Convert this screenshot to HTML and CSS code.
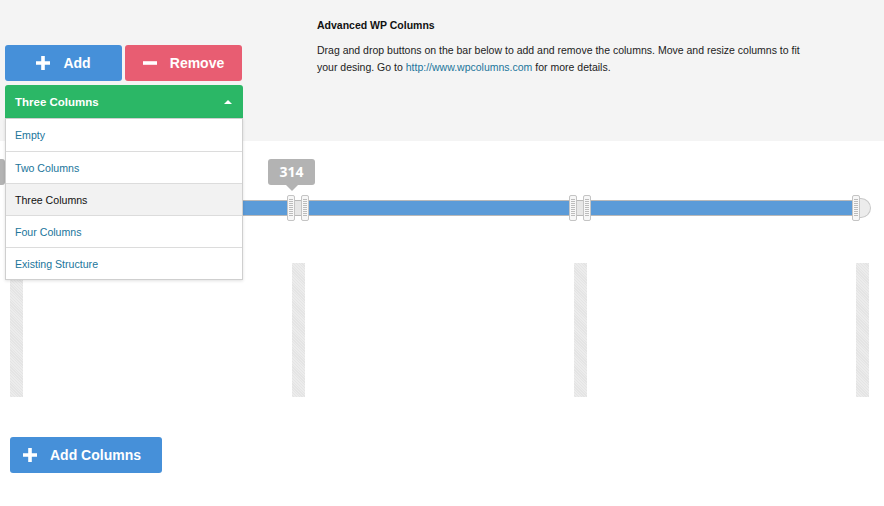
FILE: index.html
```html
<!DOCTYPE html>
<html>

<head>
  <meta charset="UTF-8">
  <link rel="stylesheet" href="styles.css">
</head>

<body>
  <div class="top">
    <div class="controls">
      <div class="btn-row">
        <button class="btn btn-add">
          <svg class="icon" viewBox="0 0 14 14"><path d="M7 0v14M0 7h14" /></svg>
          Add
        </button>
        <button class="btn btn-remove">
          <svg class="icon" viewBox="0 0 14 14"><path d="M0 7h14" /></svg>
          Remove
        </button>
      </div>
      <div class="select">
        <span>Three Columns</span>
        <span class="caret"></span>
      </div>
      <ul class="menu">
        <li class="menu-item">Empty</li>
        <li class="menu-item">Two Columns</li>
        <li class="menu-item active">Three Columns</li>
        <li class="menu-item">Four Columns</li>
        <li class="menu-item">Existing Structure</li>
      </ul>
    </div>

    <div class="intro">
      <h4 class="intro-title">Advanced WP Columns</h4>
      <p class="intro-text">Drag and drop buttons on the bar below to add and remove the columns. Move and resize columns to fit your desing. Go to <a href="#">http://www.wpcolumns.com</a> for more details.</p>
    </div>
  </div>

  <div class="workspace">
    <div class="slider">
      <div class="tip tip-first"></div>
      <div class="tip" style="left: 258px;">314</div>
      <div class="bar"></div>
      <div class="bar-cap"></div>
      <div class="gap" style="left: 285px;"></div>
      <div class="gap" style="left: 567px;"></div>
      <div class="handle" style="left: 0px;"></div>
      <div class="handle" style="left: 277px;"></div>
      <div class="handle" style="left: 291px;"></div>
      <div class="handle" style="left: 559px;"></div>
      <div class="handle" style="left: 573px;"></div>
      <div class="handle" style="left: 842px;"></div>
    </div>

    <div class="columns">
      <div class="divider"></div>
      <div class="divider"></div>
      <div class="divider"></div>
      <div class="divider"></div>
    </div>

    <button class="btn btn-add btn-columns">
      <svg class="icon" viewBox="0 0 14 14"><path d="M7 0v14M0 7h14" /></svg>
      Add Columns
    </button>
  </div>
</body>

</html>
```

FILE: styles.css
```css
body {
  margin: 0;
  font-family: 'Liberation Sans', Arial, sans-serif;
  color: #222;
  background: #fff;
  overflow: hidden;
}

.top {
  display: flex;
  height: 141px;
  background: #f4f4f4;
}

.controls {
  position: relative;
  width: 238px;
  margin: 45px 0 0 5px;
}

.btn-row {
  display: flex;
  gap: 3px;
}

.btn {
  display: flex;
  align-items: center;
  justify-content: center;
  gap: 13px;
  width: 117px;
  height: 36px;
  padding: 0;
  border: none;
  border-radius: 3px;
  color: white;
  font-family: 'Liberation Sans', Arial, sans-serif;
  font-size: 14px;
  font-weight: bold;
  cursor: pointer;
}

.btn-add {
  background: #4690d9;
}

.btn-remove {
  background: #e85d72;
}

.icon {
  width: 14px;
  height: 14px;
  stroke: white;
  stroke-width: 3.6;
  fill: none;
}

.select {
  display: flex;
  align-items: center;
  justify-content: space-between;
  height: 34px;
  margin-top: 4px;
  padding: 0 10px;
  background: #2bb766;
  border-radius: 3px 3px 0 0;
  color: white;
  font-size: 11.5px;
  font-weight: bold;
}

.caret {
  width: 0;
  height: 0;
  margin-right: 1px;
  border-left: 4px solid transparent;
  border-right: 4px solid transparent;
  border-bottom: 4px solid white;
}

/* dropdown list */
.menu {
  position: absolute;
  top: 73px;
  left: 0;
  width: 236px;
  margin: 0;
  padding: 0;
  list-style: none;
  background: white;
  border: 1px solid #cfcfcf;
  box-shadow: 0 1px 3px rgba(0, 0, 0, 0.12);
  z-index: 10;
}

.menu-item {
  height: 31px;
  padding-left: 9px;
  line-height: 32px;
  border-top: 1px solid #dcdcdc;
  color: #21759b;
  font-size: 10.6px;
}

.menu-item:first-child {
  border-top: none;
  height: 32px;
}

.menu-item.active {
  background: #f2f2f2;
  color: #111;
}

.intro {
  width: 490px;
  margin-left: 74px;
  padding-top: 19px;
}

.intro-title {
  margin: 0 0 11px 0;
  font-size: 10.5px;
  font-weight: bold;
  color: #111;
}

.intro-text {
  margin: 0;
  font-size: 10.5px;
  line-height: 17px;
  color: #222;
}

.intro-text a {
  color: #21759b;
  text-decoration: none;
}

.workspace {
  width: 859px;
  padding-left: 10px;
}

/* slider bar */
.slider {
  position: relative;
  height: 122px;
}

.bar {
  position: absolute;
  top: 59px;
  left: 0;
  width: 852px;
  height: 14px;
  background: #5b9bd8;
  border-top: 1px solid #b9b9b9;
  border-bottom: 1px solid #b9b9b9;
}

.bar-cap {
  position: absolute;
  top: 57px;
  left: 850px;
  width: 10px;
  height: 18px;
  background: #ececec;
  border: 1px solid #c8c8c8;
  border-left: none;
  border-radius: 0 10px 10px 0;
}

.gap {
  position: absolute;
  top: 60px;
  width: 8px;
  height: 14px;
  background: #e6e6e6;
}

.handle {
  position: absolute;
  top: 54px;
  width: 6px;
  height: 24px;
  background: #f7f7f7;
  border: 1px solid #c4c4c4;
  border-radius: 2px;
}

.handle:after {
  content: "";
  position: absolute;
  top: 3px;
  bottom: 3px;
  left: 1px;
  width: 4px;
  background: repeating-linear-gradient(#bcbcbc 0 1px, transparent 1px 2px);
}

.tip {
  position: absolute;
  top: 18px;
  width: 47px;
  height: 26px;
  line-height: 26px;
  background: #b3b3b3;
  border-radius: 3px;
  color: white;
  text-align: center;
  font-family: 'Open Sans', sans-serif;
  font-size: 14px;
  font-weight: bold;
}

.tip:after {
  content: "";
  position: absolute;
  left: 50%;
  bottom: -6px;
  margin-left: -6px;
  border-left: 6px solid transparent;
  border-right: 6px solid transparent;
  border-top: 6px solid #b3b3b3;
}

.tip-first {
  left: -52px;
}

/* column dividers */
.columns {
  display: flex;
  justify-content: space-between;
  height: 134px;
}

.divider {
  width: 13px;
  background: repeating-linear-gradient(45deg, #ececec 0 1px, #e4e4e4 1px 2px);
}

.btn-columns {
  justify-content: flex-start;
  gap: 13px;
  width: 152px;
  margin-top: 40px;
  padding-left: 13px;
}
```
